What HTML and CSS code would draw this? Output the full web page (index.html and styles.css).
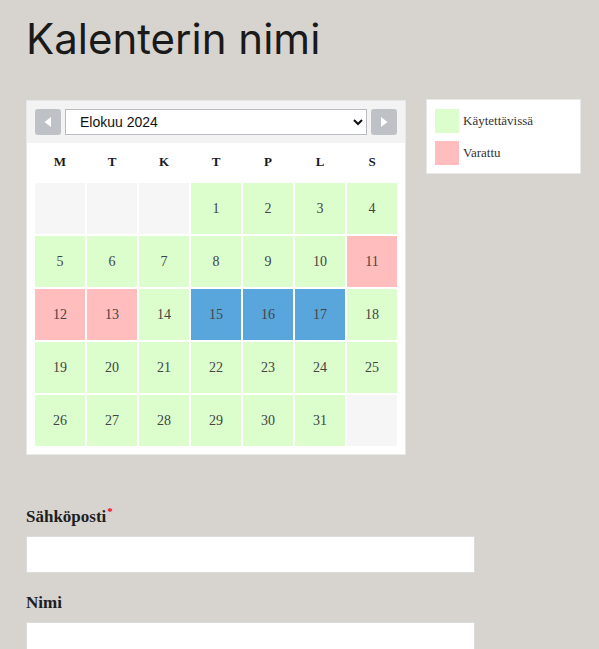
FILE: index.html
```html
<!DOCTYPE html>
<html lang="fi">
<head>
<meta charset="utf-8">
<title>Kalenterin nimi</title>
<link rel="stylesheet" href="styles.css">
</head>
<body>
<main class="page">
  <h1 class="title">Kalenterin nimi</h1>
  <div class="cal-row">
    <div class="calendar">
      <div class="cal-head">
        <button class="nav" type="button" aria-label="Edellinen"><svg width="10" height="12" viewBox="0 0 10 12"><path d="M8 1 L1.5 6 L8 11 Z" fill="#fff"/></svg></button>
        <select class="month">
          <option>Elokuu 2024</option>
        </select>
        <button class="nav" type="button" aria-label="Seuraava"><svg width="10" height="12" viewBox="0 0 10 12"><path d="M2 1 L8.5 6 L2 11 Z" fill="#fff"/></svg></button>
      </div>
      <div class="grid">
        <div class="wd">M</div><div class="wd">T</div><div class="wd">K</div><div class="wd">T</div><div class="wd">P</div><div class="wd">L</div><div class="wd">S</div>
        <div class="d empty"></div><div class="d empty"></div><div class="d empty"></div>
        <div class="d ok">1</div><div class="d ok">2</div><div class="d ok">3</div><div class="d ok">4</div>
        <div class="d ok">5</div><div class="d ok">6</div><div class="d ok">7</div><div class="d ok">8</div><div class="d ok">9</div><div class="d ok">10</div><div class="d busy">11</div>
        <div class="d busy">12</div><div class="d busy">13</div><div class="d ok">14</div><div class="d sel">15</div><div class="d sel">16</div><div class="d sel">17</div><div class="d ok">18</div>
        <div class="d ok">19</div><div class="d ok">20</div><div class="d ok">21</div><div class="d ok">22</div><div class="d ok">23</div><div class="d ok">24</div><div class="d ok">25</div>
        <div class="d ok">26</div><div class="d ok">27</div><div class="d ok">28</div><div class="d ok">29</div><div class="d ok">30</div><div class="d ok">31</div><div class="d empty"></div>
      </div>
    </div>
    <div class="legend">
      <div class="leg-item"><span class="swatch ok"></span><span>Käytettävissä</span></div>
      <div class="leg-item"><span class="swatch busy"></span><span>Varattu</span></div>
    </div>
  </div>
  <form class="form">
    <label class="field">
      <span class="lbl">Sähköposti<sup class="req">*</sup></span>
      <input class="input" type="email">
    </label>
    <label class="field">
      <span class="lbl">Nimi</span>
      <input class="input" type="text">
    </label>
  </form>
</main>
</body>
</html>
```
FILE: styles.css
```css
html, body {
  margin: 0;
  padding: 0;
  background: #d7d4d0;
}
.page {
  padding: 0 26px;
}
.title {
  margin: 0;
  padding-top: 13px;
  font-family: Inter, "Liberation Sans", sans-serif;
  font-weight: 400;
  font-size: 42px;
  line-height: 51px;
  color: #1a1a1a;
}
.cal-row {
  display: flex;
  align-items: flex-start;
  gap: 20px;
  margin-top: 35px;
}
.calendar {
  flex: none;
  width: 378px;
  background: #fff;
  border: 1px solid #e8e8e8;
  margin-top: 1px;
}
.cal-head {
  display: flex;
  gap: 4px;
  padding: 8px;
  background: #f3f3f3;
}
.nav {
  width: 26px;
  height: 26px;
  padding: 0;
  border: none;
  border-radius: 3px;
  background: #bec2c6;
  display: flex;
  align-items: center;
  justify-content: center;
}
.month {
  flex: 1;
  height: 26px;
  border: 1px solid #b9bdc1;
  border-radius: 0;
  background: #fff;
  font-family: "Liberation Sans", Arial, sans-serif;
  font-size: 14px;
  color: #111;
  padding: 0 10px;
}
.grid {
  display: grid;
  grid-template-columns: repeat(7, 50px);
  grid-template-rows: 38px;
  grid-auto-rows: 51px;
  gap: 2px;
  padding: 0 8px 8px;
}
.wd {
  display: flex;
  align-items: center;
  justify-content: center;
  font-family: "Liberation Serif", "Times New Roman", serif;
  font-weight: 700;
  font-size: 13px;
  color: #1a1a1a;
}
.d {
  display: flex;
  align-items: center;
  justify-content: center;
  font-family: "Liberation Serif", "Times New Roman", serif;
  font-size: 14px;
  color: #444;
}
.empty { background: #f6f6f6; }
.ok { background: #dcfdcc; }
.busy { background: #ffbdbd; }
.sel { background: #59a6dd; }
.legend {
  flex: none;
  width: 137px;
  background: #fff;
  border: 1px solid #e8e8e8;
  padding: 9px 8px 8px;
  display: flex;
  flex-direction: column;
  gap: 8px;
}
.leg-item {
  display: flex;
  align-items: center;
  gap: 4px;
  font-family: "Liberation Serif", "Times New Roman", serif;
  font-size: 13px;
  color: #333;
}
.swatch {
  width: 24px;
  height: 24px;
  flex: none;
}
.form {
  margin-top: 52px;
  display: flex;
  flex-direction: column;
  gap: 20px;
  width: 449px;
}
.field {
  display: flex;
  flex-direction: column;
  gap: 9px;
}
.lbl {
  font-family: "Liberation Serif", "Times New Roman", serif;
  font-weight: 700;
  font-size: 17px;
  line-height: 20px;
  color: #1e1e1e;
}
.req {
  color: #e00;
  font-size: 11px;
  line-height: 0;
  vertical-align: 7px;
  margin-left: 1px;
}
.input {
  box-sizing: border-box;
  width: 100%;
  height: 37px;
  margin: 0;
  border: 1px solid #dcdcdc;
  background: #fff;
}
```
